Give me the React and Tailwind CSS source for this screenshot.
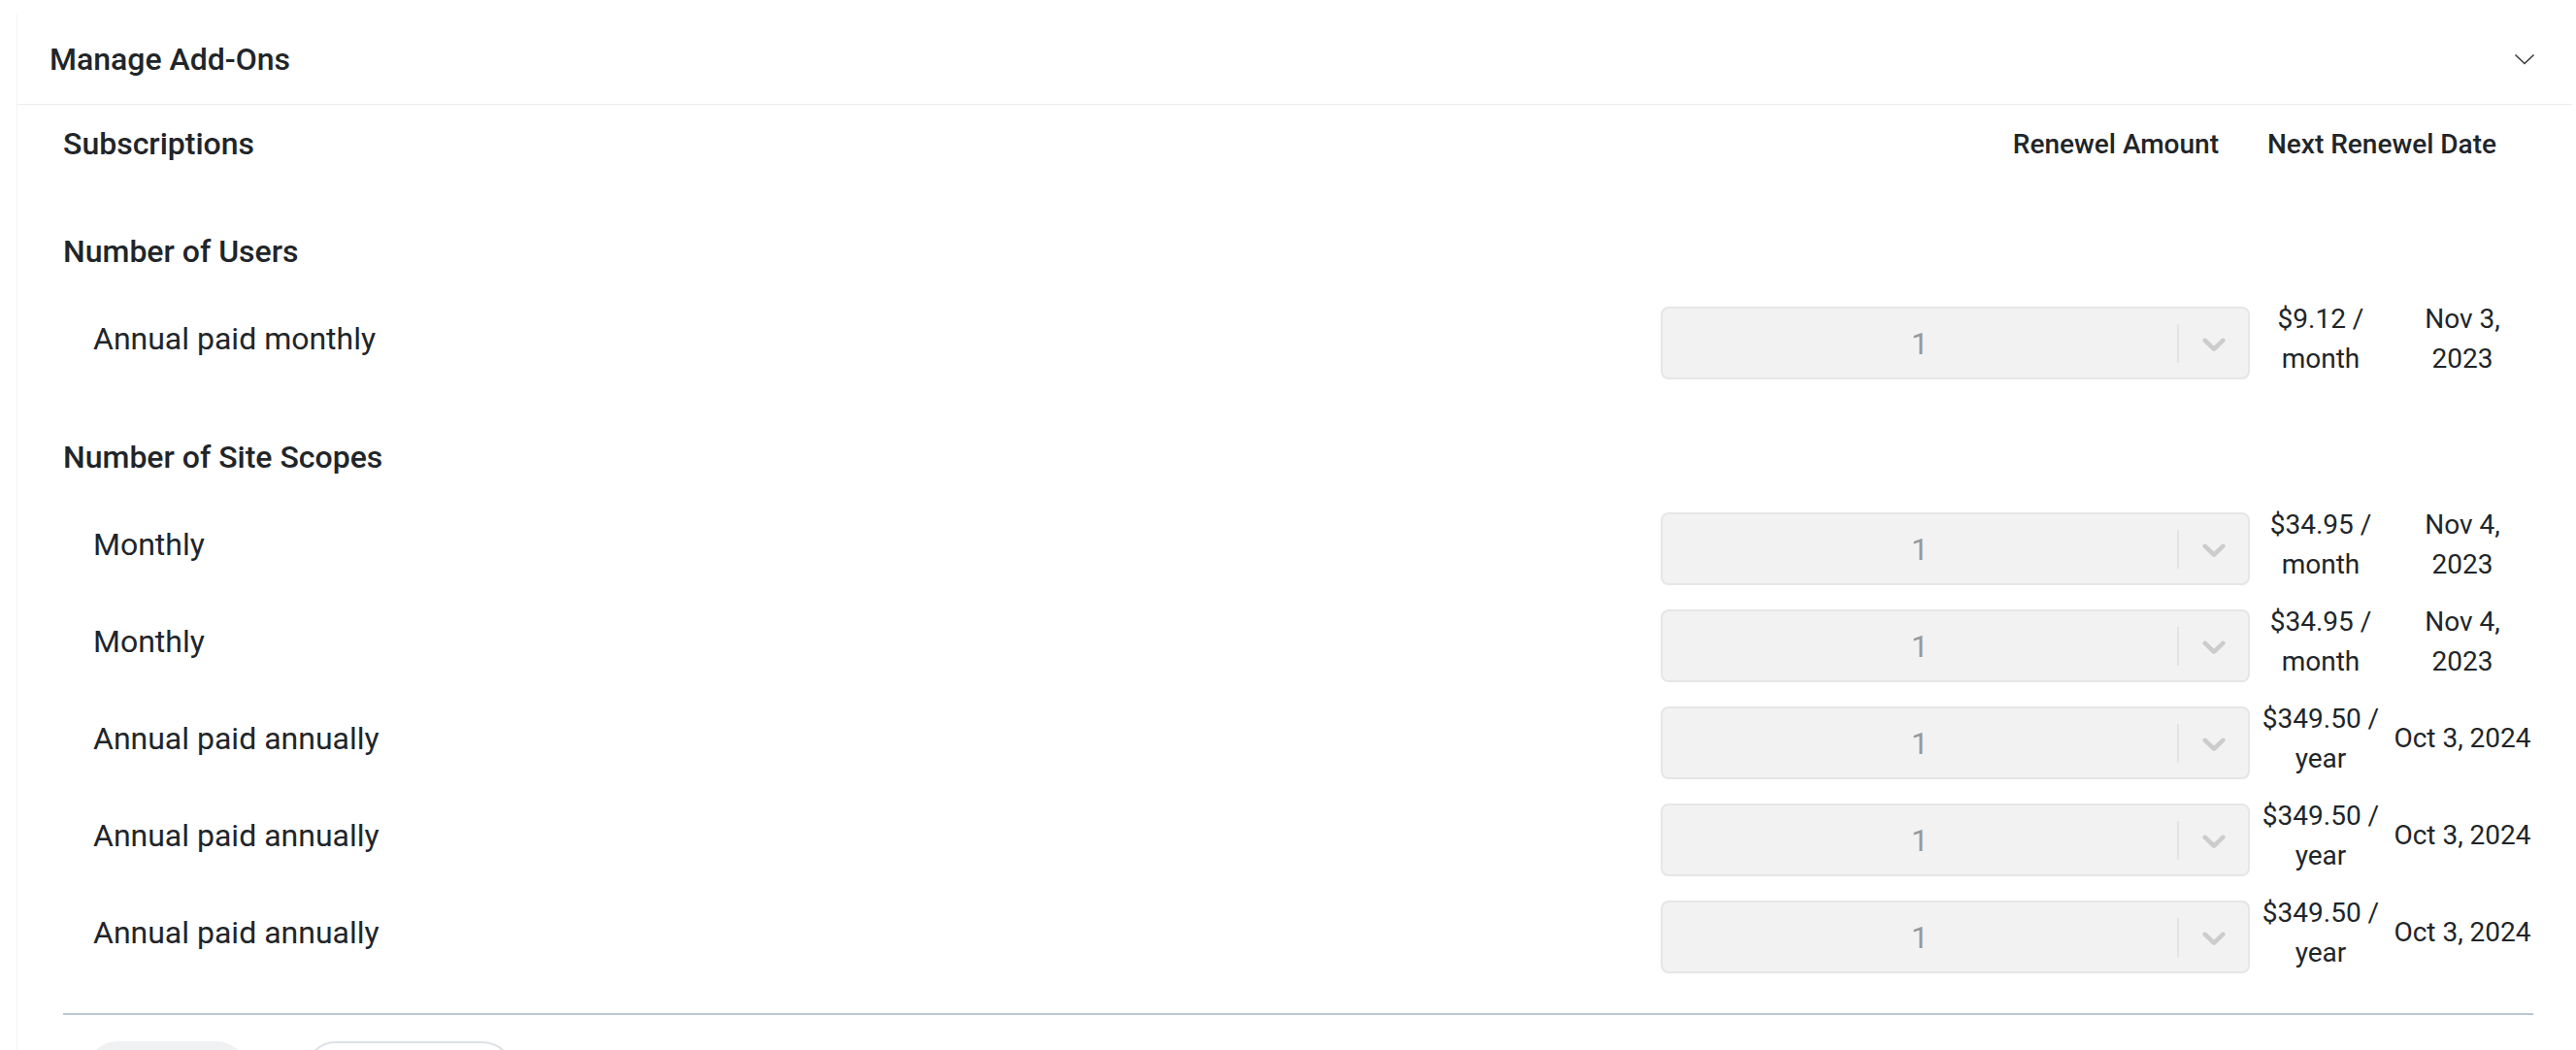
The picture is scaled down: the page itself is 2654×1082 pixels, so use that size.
import { useState } from 'react'

const sections = [
  {
    title: 'Number of Users',
    gap: 'mt-[63px]',
    items: [{ label: 'Annual paid monthly', price: ['$9.12 /', 'month'], date: ['Nov 3,', '2023'] }],
  },
  {
    title: 'Number of Site Scopes',
    gap: 'mt-[56px]',
    items: [
      { label: 'Monthly', price: ['$34.95 /', 'month'], date: ['Nov 4,', '2023'] },
      { label: 'Monthly', price: ['$34.95 /', 'month'], date: ['Nov 4,', '2023'] },
      { label: 'Annual paid annually', price: ['$349.50 /', 'year'], date: ['Oct 3, 2024'] },
      { label: 'Annual paid annually', price: ['$349.50 /', 'year'], date: ['Oct 3, 2024'] },
      { label: 'Annual paid annually', price: ['$349.50 /', 'year'], date: ['Oct 3, 2024'] },
    ],
  },
]

function QuantitySelect({ value }) {
  return (
    <div className="mt-[10px] flex h-[75px] w-[607px] shrink-0 items-center rounded-[8px] border-2 border-[#e6e6e6] bg-[#f2f2f2]">
      <div className="flex-1 text-center text-[32px] leading-none text-[#999999]">{value}</div>
      <span className="h-[40px] w-[2px] bg-[#e3e3e3]" />
      <div className="flex w-[71px] items-center justify-center">
        <svg width="40" height="40" viewBox="0 0 20 20" fill="#cccccc">
          <path d="M4.516 7.548c0.436-0.446 1.043-0.481 1.576 0l3.908 3.747 3.908-3.747c0.533-0.481 1.141-0.446 1.574 0 0.436 0.445 0.408 1.197 0 1.615-0.406 0.418-4.695 4.502-4.695 4.502-0.217 0.223-0.502 0.335-0.787 0.335s-0.57-0.112-0.789-0.335c0 0-4.287-4.084-4.695-4.502s-0.436-1.17 0-1.615z" />
        </svg>
      </div>
    </div>
  )
}

function AddOnRow({ item }) {
  return (
    <div className="flex h-[85px] items-center">
      <div className="flex-1 pl-[31px] text-[32px] leading-[48px]">{item.label}</div>
      <QuantitySelect value={1} />
      <div className="w-[146px] text-center text-[28px] leading-[41px]">
        {item.price.map((line) => (
          <div key={line} className="whitespace-nowrap">{line}</div>
        ))}
      </div>
      <div className="w-[146px] text-center text-[28px] leading-[41px]">
        {item.date.map((line) => (
          <div key={line} className="whitespace-nowrap">{line}</div>
        ))}
      </div>
    </div>
  )
}

export default function App() {
  const [open, setOpen] = useState(true)

  return (
    <div className="min-h-screen bg-white pt-[15px] pl-[17px] pr-[4px] text-[#212529]" style={{ fontFamily: 'Roboto, "Liberation Sans", sans-serif' }}>
      <section className="border-l border-[#f3f3f3] bg-white">
        <button
          onClick={() => setOpen(!open)}
          className="flex h-[93px] w-full items-center justify-between border-b border-[#ececec] pl-[33px] pr-[38px] text-left"
        >
          <span className="text-[32px] font-medium leading-[48px]">Manage Add-Ons</span>
          <svg width="22" height="12" viewBox="0 0 22 12" fill="none" stroke="#3a3a3a" strokeWidth="1.6">
            <polyline points="1.5,1.5 11,10.5 20.5,1.5" />
          </svg>
        </button>

        {open && (
          <div className="pl-[47px] pr-[40px] pt-[16px]">
            <div className="flex items-start justify-between">
              <h2 className="text-[32px] font-medium leading-[48px]">Subscriptions</h2>
              <div className="mr-[38px] mt-[5px] flex gap-[50px] text-[28px] font-medium leading-[40px]">
                <span>Renewel Amount</span>
                <span>Next Renewel Date</span>
              </div>
            </div>

            {sections.map((section) => (
              <div key={section.title} className={section.gap}>
                <h3 className="text-[32px] font-medium leading-[48px]">{section.title}</h3>
                <div className="mt-[23px] flex flex-col gap-[15px]">
                  {section.items.map((item, index) => (
                    <AddOnRow key={index} item={item} />
                  ))}
                </div>
              </div>
            ))}

            <div className="mt-[41px] h-[2px] bg-[#b9c8d3]" />

            <div className="mt-[27px] flex gap-[59px] pl-[24px] pb-[40px]">
              <button aria-label="Save" className="h-[64px] w-[166px] rounded-[32px] bg-[#f0f1f3]" />
              <button aria-label="Cancel" className="h-[64px] w-[215px] rounded-[32px] border-2 border-[#dde1e6] bg-white" />
            </div>
          </div>
        )}
      </section>
    </div>
  )
}
